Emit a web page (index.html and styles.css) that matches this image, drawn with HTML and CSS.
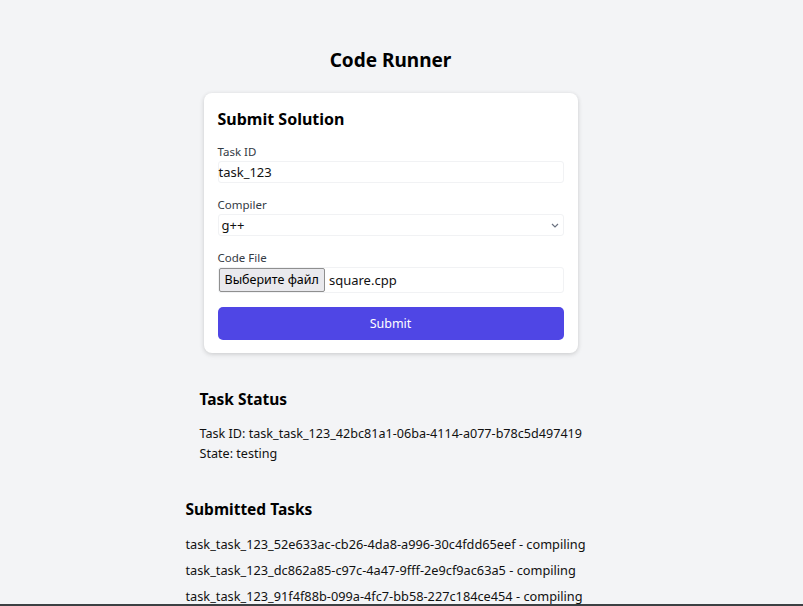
FILE: index.html
```html
<!DOCTYPE html>
<html lang="en">
<head>
<meta charset="utf-8">
<title>Code Runner</title>
<link rel="stylesheet" href="styles.css">
</head>
<body>
<main class="page">
  <h1 class="title">Code Runner</h1>
  <form class="card">
    <h2 class="card-title">Submit Solution</h2>
    <div class="field">
      <label class="label">Task ID</label>
      <div class="input">task_123</div>
    </div>
    <div class="field">
      <label class="label">Compiler</label>
      <div class="input select"><span class="select-value">g++</span>
        <svg class="chev" width="8" height="5" viewBox="0 0 8 5"><path d="M1 1l3 3 3-3" fill="none" stroke="#6b7280" stroke-width="1.2"/></svg>
      </div>
    </div>
    <div class="field">
      <label class="label">Code File</label>
      <div class="input file"><span class="file-btn">Выберите файл</span><span class="file-name">square.cpp</span></div>
    </div>
    <div class="submit">Submit</div>
  </form>
  <section class="status">
    <h3 class="section-title">Task Status</h3>
    <p class="line">Task ID: task_task_123_42bc81a1-06ba-4114-a077-b78c5d497419</p>
    <p class="line">State: testing</p>
  </section>
  <section class="tasks">
    <h3 class="section-title">Submitted Tasks</h3>
    <ul class="task-list">
      <li>task_task_123_52e633ac-cb26-4da8-a996-30c4fdd65eef - compiling</li>
      <li>task_task_123_dc862a85-c97c-4a47-9fff-2e9cf9ac63a5 - compiling</li>
      <li>task_task_123_91f4f88b-099a-4fc7-bb58-227c184ce454 - compiling</li>
    </ul>
  </section>
</main>
<div class="frame-bottom"></div>
</body>
</html>
```
FILE: styles.css
```css
html, body {
  margin: 0;
  padding: 0;
  background: #f3f4f6;
  font-family: "Noto Sans", "Open Sans", sans-serif;
  color: #111;
  height: 606px;
  overflow: hidden;
}
.page {
  display: flex;
  flex-direction: column;
  align-items: center;
  padding-top: 47px;
  padding-right: 22px;
}
.title {
  margin: 0;
  font-size: 19px;
  line-height: 26px;
  font-weight: 700;
  color: #000;
}
.card {
  margin-top: 20px;
  width: 374px;
  box-sizing: border-box;
  background: #fff;
  border-radius: 8px;
  box-shadow: 0 1px 4px rgba(0,0,0,0.12), 0 2px 6px rgba(0,0,0,0.06);
  padding: 14px 14px 13px;
  display: flex;
  flex-direction: column;
}
.card-title {
  margin: 0 0 12px;
  font-size: 16px;
  line-height: 24px;
  font-weight: 700;
  color: #000;
}
.field {
  display: flex;
  flex-direction: column;
  margin-bottom: 13px;
}
.label {
  font-size: 11.5px;
  line-height: 18px;
  color: #333a44;
}
.input {
  height: 22px;
  box-sizing: border-box;
  border: 1px solid #f1f2f4;
  border-radius: 3px;
  font-size: 13px;
  line-height: 20px;
  color: #111;
  display: flex;
  align-items: center;
}
.select {
  justify-content: space-between;
  padding: 0 4px 0 3px;
}
.chev { display: block; }
.file {
  height: 26px;
  padding: 0;
}
.file-btn {
  height: 24px;
  box-sizing: border-box;
  border: 1px solid #8f8f8f;
  border-radius: 2px;
  background: #e9e9ed;
  padding: 0 5px;
  font-size: 12.5px;
  line-height: 22px;
  color: #000;
  margin-right: 4px;
}
.file-name { font-size: 13px; }
.submit {
  margin-top: 1px;
  height: 33px;
  border-radius: 5px;
  background: #4f46e5;
  color: #fff;
  font-size: 12.5px;
  display: flex;
  align-items: center;
  justify-content: center;
}
.status {
  margin-top: 35px;
  width: 382px;
  white-space: nowrap;
}
.section-title {
  margin: 0;
  font-size: 15.5px;
  line-height: 22px;
  font-weight: 700;
  color: #000;
}
.status .section-title { margin-bottom: 14px; }
.line {
  margin: 0;
  font-size: 12.6px;
  line-height: 20px;
}
.tasks {
  margin-top: 34px;
  width: 410px;
  white-space: nowrap;
}
.tasks .section-title { margin-bottom: 14px; }
.task-list {
  list-style: none;
  margin: 0;
  padding: 0;
  display: flex;
  flex-direction: column;
  gap: 6px;
}
.task-list li {
  font-size: 12.75px;
  line-height: 20px;
}
.frame-bottom {
  position: fixed;
  left: 0;
  right: 0;
  bottom: 0;
  height: 2px;
  background: #3c4043;
}
```
